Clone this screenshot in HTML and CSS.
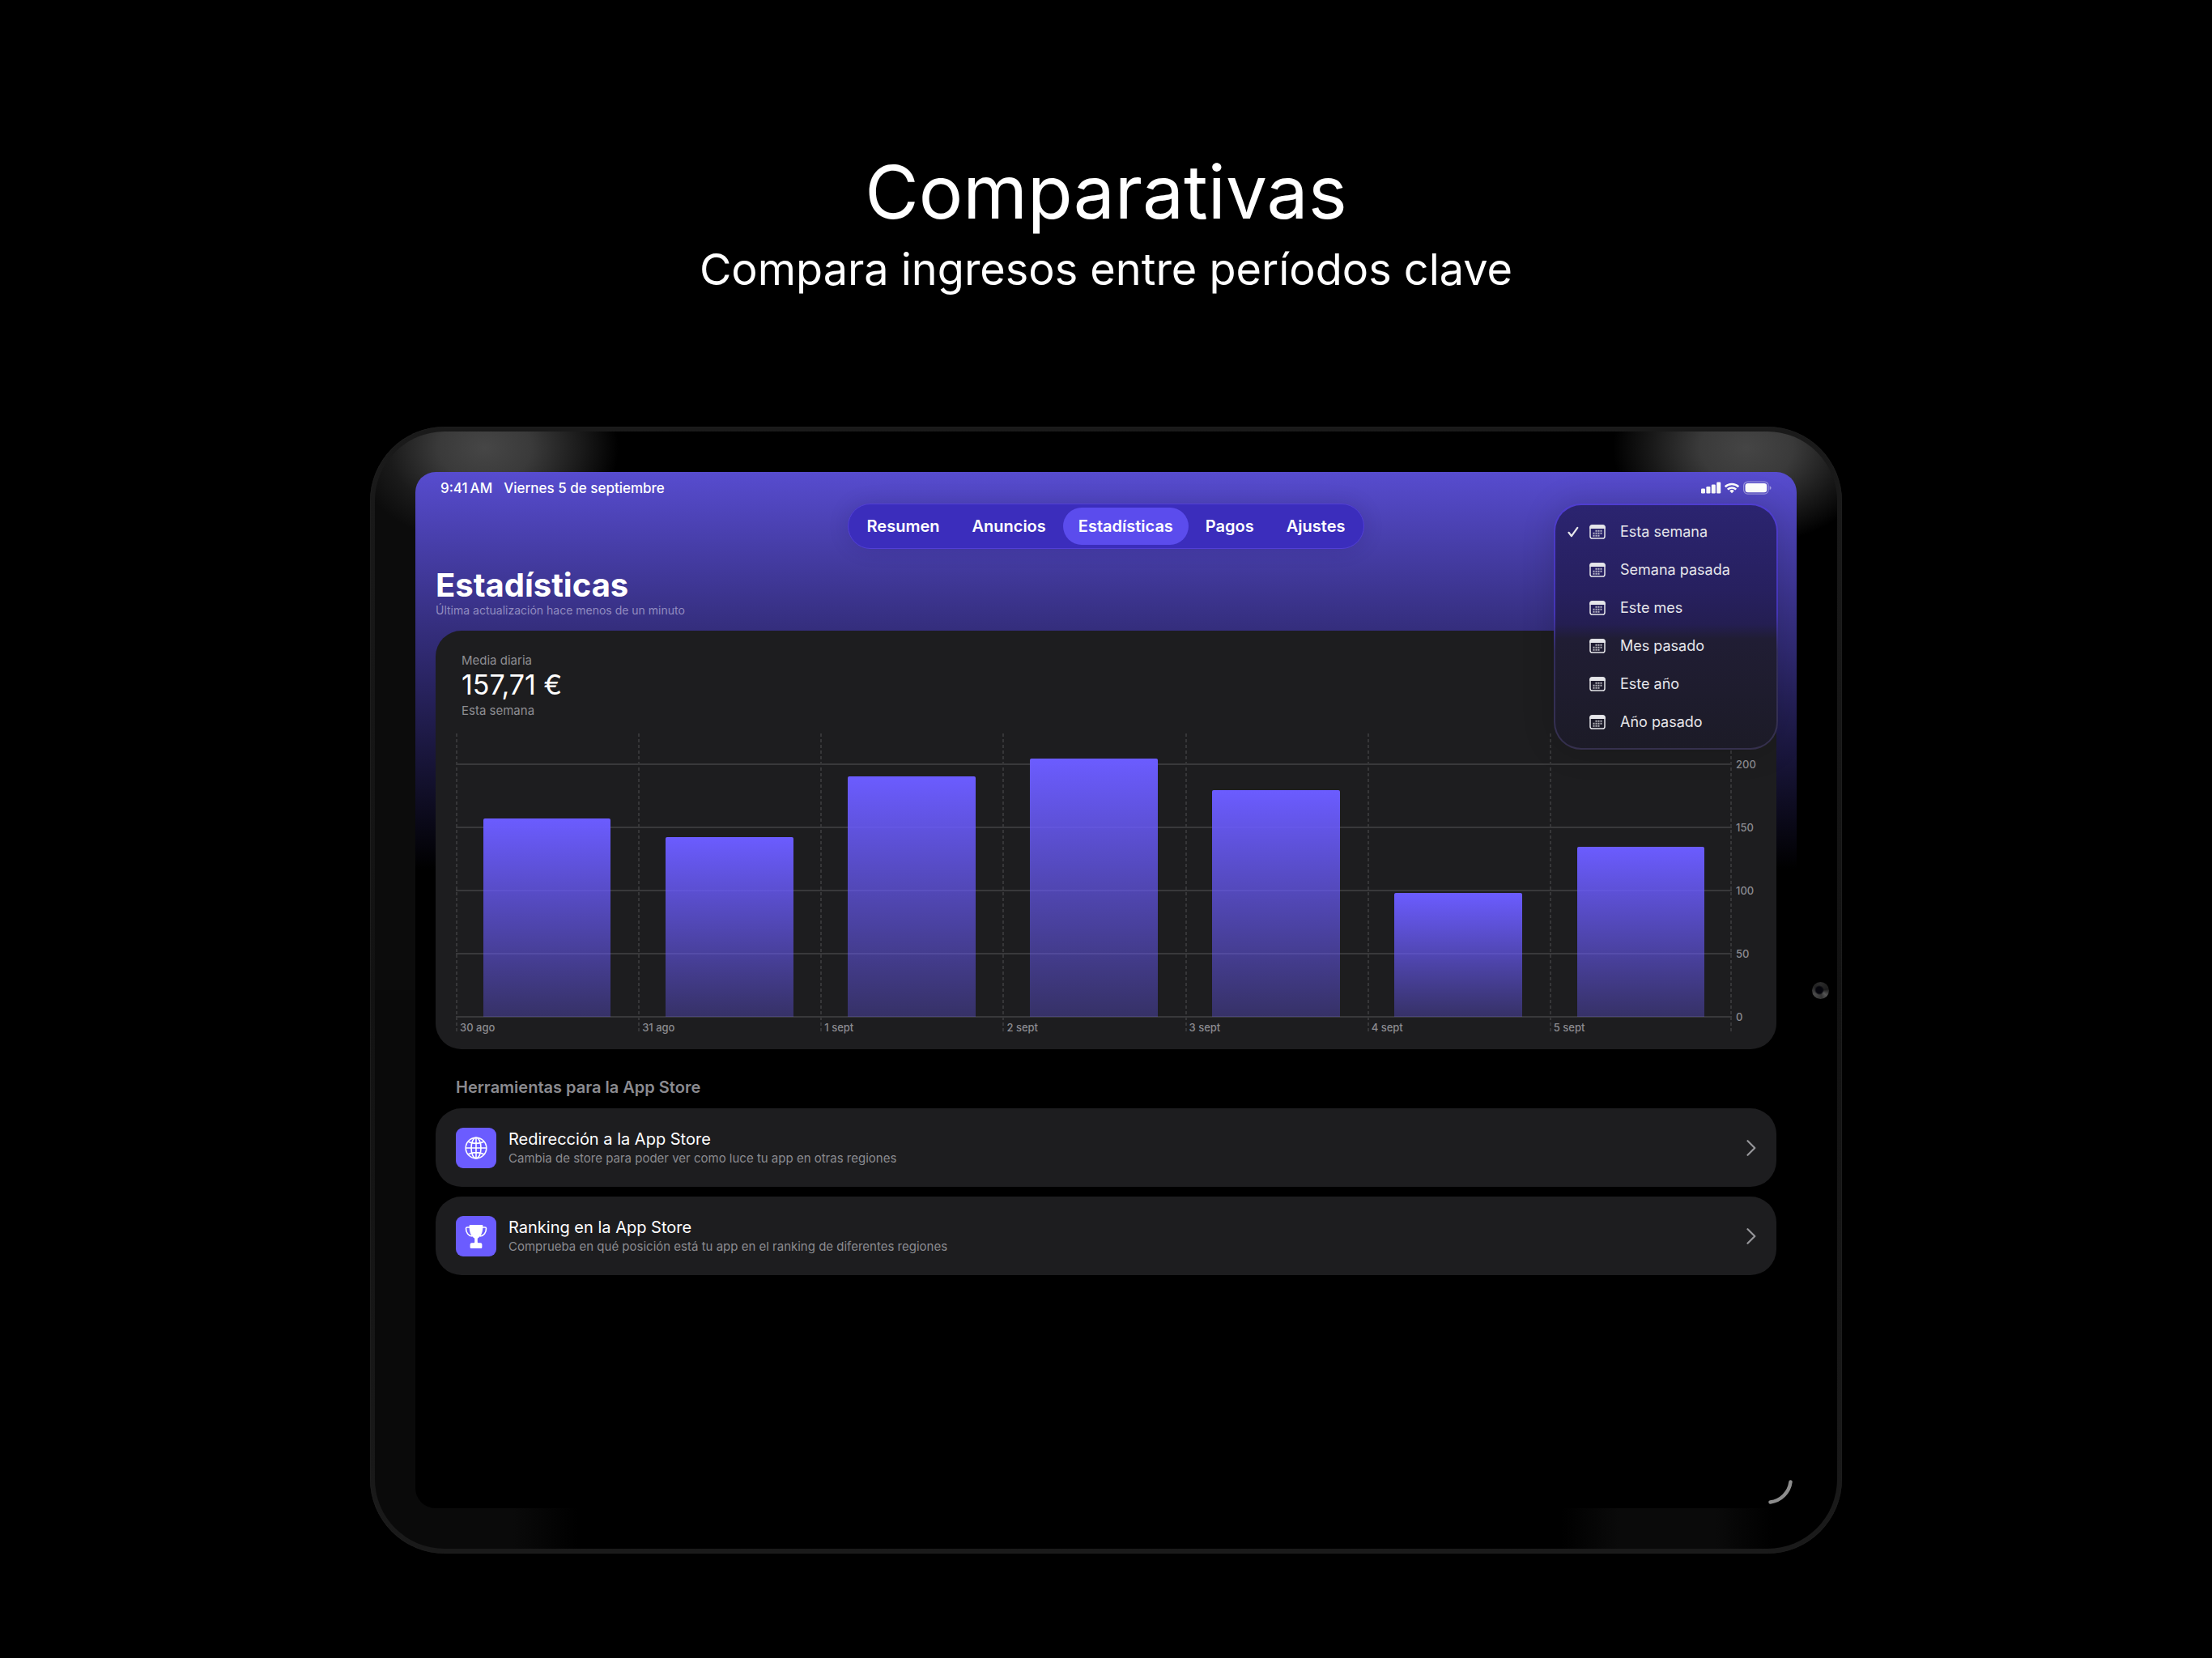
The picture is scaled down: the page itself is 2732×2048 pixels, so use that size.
FILE: index.html
```html
<!DOCTYPE html>
<html lang="es">
<head>
<meta charset="utf-8">
<meta name="viewport" content="width=device-width, initial-scale=1">
<title>Comparativas</title>
<link rel="stylesheet" href="styles.css">
</head>
<body>
<svg class="sprite" aria-hidden="true">
  <symbol id="calendar" viewBox="0 0 20 18">
    <rect x="1" y="1" width="18" height="16" rx="2.6" fill="none" stroke="currentColor" stroke-width="1.5"/>
    <path d="M.3 5V3.2Q.3.3 3.4.3h13.2q3.100 0 3.100 2.900V5z" fill="currentColor"/>
    <path d="M7.500 7.700h8.200M4.500 10.700h11.200M4.500 13.700h8.200" fill="none" stroke="currentColor" stroke-width="1.900" stroke-dasharray="2 1" opacity=".75"/>
  </symbol>
  <symbol id="chevron" viewBox="0 0 14 22">
    <path d="M2.5 2.2 11.3 11l-8.8 8.8" fill="none" stroke="currentColor" stroke-width="2.2" stroke-linecap="round" stroke-linejoin="round"/>
  </symbol>
</svg>

<header class="hero">
  <h1>Comparativas</h1>
  <p>Compara ingresos entre períodos clave</p>
</header>

<main class="device">
  <div class="bezel">
    <div class="screen">
      <div class="status">
        <span>9:41&#8201;AM</span><span>Viernes 5 de septiembre</span>
        <svg class="status-icons" viewBox="0 0 88 18" fill="#fff" aria-label="Señal, wifi y batería">
          <rect x="0" y="9.5" width="5" height="6" rx="1.2"/><rect x="6.4" y="7" width="5" height="8.500" rx="1.2"/><rect x="12.800" y="4.500" width="5" height="11" rx="1.2"/><rect x="19.200" y="1.500" width="5" height="14" rx="1.2"/>
          <g fill="none" stroke="#fff" stroke-width="2.600"><path d="M29.700 7.300a12 12 0 0 1 16.600 0"/><path d="M32.800 10.600a7.500 7.500 0 0 1 10.400 0"/></g><path d="M38 15.200l-2.800-2.900a4 4 0 0 1 5.600 0z"/>
          <rect x="52.600" y="1.100" width="30.500" height="15" rx="4.800" fill="none" stroke="#fff" stroke-opacity=".4" stroke-width="1.200"/><rect x="54.500" y="3" width="26.700" height="11.200" rx="3.200"/><path d="M84.600 6.300q2 .8 2 2.400t-2 2.400z" fill-opacity=".45"/>
        </svg>
      </div>

      <nav class="tabs" aria-label="Secciones">
        <a href="#resumen">Resumen</a>
        <a href="#anuncios">Anuncios</a>
        <a href="#estadisticas" class="active" aria-current="page">Estadísticas</a>
        <a href="#pagos">Pagos</a>
        <a href="#ajustes">Ajustes</a>
      </nav>

      <section class="content" id="estadisticas">
        <h2>Estadísticas</h2>
        <p class="updated">Última actualización hace menos de un minuto</p>

        <article class="card stats">
          <div class="summary">
            <p class="caption">Media diaria</p>
            <p class="amount">157,71 €</p>
            <p class="caption period">Esta semana</p>
          </div>
          <div class="chart">
            <div class="scale">
              <div><span>200</span></div>
              <div><span>150</span></div>
              <div><span>100</span></div>
              <div><span>50</span></div>
              <div><span>0</span></div>
            </div>
            <div class="days">
              <div class="day"><div class="track"><i style="height:70.1%"></i></div><span>30 ago</span></div>
              <div class="day"><div class="track"><i style="height:63.4%"></i></div><span>31 ago</span></div>
              <div class="day"><div class="track"><i style="height:84.8%"></i></div><span>1 sept</span></div>
              <div class="day"><div class="track"><i style="height:91.1%"></i></div><span>2 sept</span></div>
              <div class="day"><div class="track"><i style="height:79.9%"></i></div><span>3 sept</span></div>
              <div class="day"><div class="track"><i style="height:43.8%"></i></div><span>4 sept</span></div>
              <div class="day"><div class="track"><i style="height:60%"></i></div><span>5 sept</span></div>
            </div>
          </div>
        </article>

        <h3>Herramientas para la App Store</h3>
        <div class="tools">
          <a class="card tool" href="#redireccion">
            <span class="tile">
              <svg viewBox="0 0 30 30" width="30" height="30" fill="none" stroke="#fff" stroke-width="1.6"><circle cx="15" cy="15" r="12.800"/><ellipse cx="15" cy="15" rx="6" ry="12.800"/><path d="M15 2.200v25.600M2.200 15h25.600M5.200 7.200q9.800 4.400 19.600 0M5.200 22.800q9.800-4.400 19.600 0"/></svg>
            </span>
            <span class="words"><strong>Redirección a la App Store</strong><small>Cambia de store para poder ver como luce tu app en otras regiones</small></span>
            <svg class="chevron"><use href="#chevron"/></svg>
          </a>
          <a class="card tool" href="#ranking">
            <span class="tile">
              <svg viewBox="0 0 30 30" width="30" height="30"><path d="M7.600 1h14.800q1 0 1 1.200C23.400 9 22 14.600 17.400 17.200q-.6.400-.6 1v4q0 1 1 1h2.600q2 0 2 2v3.300q0 1.500-1.400 1.500H9q-1.400 0-1.400-1.500v-3.300q0-2 2-2h2.600q1 0 1-1v-4q0-.6-.6-1C8 14.600 6.600 9 6.600 2.200 6.600 1 7.600 1 7.600 1z" fill="#fff"/><path d="M7 4H4Q2.500 4 2.500 5.500C2.500 10.500 5.500 14.500 10 15M23 4h3q1.500 0 1.500 1.500C27.500 10.500 24.500 14.500 20 15" fill="none" stroke="#fff" stroke-width="1.600"/></svg>
            </span>
            <span class="words"><strong>Ranking en la App Store</strong><small>Comprueba en qué posición está tu app en el ranking de diferentes regiones</small></span>
            <svg class="chevron"><use href="#chevron"/></svg>
          </a>
        </div>
      </section>

      <div class="menu" role="menu" aria-label="Periodo">
        <button type="button" role="menuitemradio" aria-checked="true"><svg class="check" viewBox="0 0 14 14"><path d="M1.500 7.800 5 12.200 12.300 1.800" fill="none" stroke="currentColor" stroke-width="2.200" stroke-linecap="round" stroke-linejoin="round"/></svg><svg class="cal"><use href="#calendar"/></svg>Esta semana</button>
        <button type="button" role="menuitemradio" aria-checked="false"><svg class="cal"><use href="#calendar"/></svg>Semana pasada</button>
        <button type="button" role="menuitemradio" aria-checked="false"><svg class="cal"><use href="#calendar"/></svg>Este mes</button>
        <button type="button" role="menuitemradio" aria-checked="false"><svg class="cal"><use href="#calendar"/></svg>Mes pasado</button>
        <button type="button" role="menuitemradio" aria-checked="false"><svg class="cal"><use href="#calendar"/></svg>Este año</button>
        <button type="button" role="menuitemradio" aria-checked="false"><svg class="cal"><use href="#calendar"/></svg>Año pasado</button>
      </div>
      <svg class="corner" viewBox="0 0 32 32" aria-hidden="true"><path d="M28.500 3.500A29 29 0 0 1 3.500 28.500" fill="none" stroke="#8c8c8c" stroke-width="4.500" stroke-linecap="round"/></svg>
    </div>
    <div class="camera"></div>
  </div>
</main>
</body>
</html>
```

FILE: styles.css
```css
* { box-sizing: border-box; }

body {
  margin: 0;
  padding: 176px 24px 128px;
  background: #000;
  color: #fff;
  font-family: Inter, "Liberation Sans", sans-serif;
}

h1, h2, h3, p { margin: 0; }
a { color: inherit; text-decoration: none; }
.sprite { display: none; }

/* Headline */
.hero { text-align: center; margin-bottom: 159px; }
.hero h1 { font-size: 91px; line-height: 122px; font-weight: 400; }
.hero p { font-size: 54px; line-height: 70px; }

/* Tablet */
.device {
  max-width: 1818px;
  margin: 0 auto;
  padding: 6px;
  border-radius: 92px;
  background: linear-gradient(#1a1a1a, #121212 50%, #1a1a1a);
  box-shadow: inset 0 0 0 1px #1d1d1d;
}
.bezel {
  position: relative;
  padding: 50px;
  border-radius: 86px;
  background:
    radial-gradient(ellipse 165px 120px at 136px 20px, #464646 0, #3a3a3a 35%, #1a1a1a 72%, transparent 100%),
    radial-gradient(ellipse 165px 120px at calc(100% - 112px) 20px, #454545 0, #3a3a3a 35%, #181818 72%, transparent 100%),
    linear-gradient(90deg, #0a0a0a 0, #0a0a0a 170px, #000 250px, #000 calc(100% - 340px), #0a0a0a calc(100% - 270px), #0a0a0a calc(100% - 150px), #000 calc(100% - 80px)) bottom / 100% 50% no-repeat,
    linear-gradient(90deg, #0c0c0c 0, #0c0c0c 50px, #000 240px);
}
.camera {
  position: absolute;
  right: 10px;
  top: 50%;
  width: 21px;
  height: 21px;
  margin-top: -10px;
  border-radius: 50%;
  background:
    radial-gradient(circle at 9px 10px, #05050c 0, #05050c 4px, transparent 6px),
    conic-gradient(#2a2a2a, #1c1c1c 80deg, #555 130deg, #333 170deg, #4a4a4a 240deg, #222 300deg, #2a2a2a);
}
.screen {
  position: relative;
  aspect-ratio: 4 / 3;
  overflow: hidden;
  border-radius: 25px;
  background: #000 linear-gradient(#574ccf, #000 490px);
}

.status {
  display: flex;
  align-items: center;
  gap: 14px;
  height: 39px;
  padding: 0 30px 0 31px;
  font-size: 17px;
  font-weight: 500;
}
.status-icons { width: 88px; height: 18px; margin-left: auto; }

.tabs {
  display: flex;
  gap: 2px;
  width: fit-content;
  height: 56px;
  margin: 0 auto 22px;
  padding: 4px;
  border: 1px solid #5340d6;
  border-radius: 28px;
  background: #3b2dbc;
  box-shadow: 0 0 24px rgba(30, 20, 90, .2);
  font-size: 20px;
  font-weight: 600;
}
.tabs a {
  display: flex;
  align-items: center;
  padding: 0 19px;
  border-radius: 23px;
}
.tabs .active { background: #5b4ced; }

.content { padding: 0 25px; }
.content h2 { font-size: 40px; line-height: 46px; font-weight: 700; }
.updated { font-size: 14px; line-height: 16px; margin-bottom: 17px; color: #918cc0; }

.card { border-radius: 32px; background: #1d1d1f; }
.stats { padding: 27px 24px 21px 25px; }
.summary { padding-left: 7px; margin-bottom: 16px; }
.caption { font-size: 15px; line-height: 20px; color: #8e8e93; }
.period { line-height: 24px; }
.amount { font-size: 34px; line-height: 40px; }

/* Bar chart: the value scale and the days share one grid cell */
.chart { display: grid; grid-template-rows: 369px; font-size: 13px; font-weight: 500; color: #8b8b90; }
.scale, .days { grid-area: 1 / 1; }
.scale { align-self: end; margin-bottom: -20px; }
.scale div { display: flex; align-items: center; height: 78px; }
.scale div::before { content: ""; flex: 1; height: 2px; background: #39393b; }
.scale span { width: 31px; padding-left: 5px; }
.days {
  display: flex;
  margin-right: 31px;
  background: repeating-linear-gradient(#363638 0 4px, transparent 4px 7px) right / 2px 100% no-repeat;
}
.day {
  flex: 1;
  display: flex;
  flex-direction: column;
  background: repeating-linear-gradient(#363638 0 4px, transparent 4px 7px) left / 2px 100% no-repeat;
}
.track { flex: none; height: 350px; display: flex; align-items: flex-end; justify-content: center; }
.track i { width: 70%; border-radius: 2px 2px 0 0; background: linear-gradient(#6b5cff, rgba(107, 92, 255, .32)); }
.day span { padding-left: 5px; line-height: 27px; }

.content h3 { padding: 34px 25px 13px; font-size: 20px; line-height: 26px; font-weight: 600; color: #8b8b90; }
.tools { display: flex; flex-direction: column; gap: 12px; }
.tool { display: flex; align-items: center; gap: 15px; height: 97px; padding: 0 24px 0 25px; }
.tile { display: grid; place-items: center; width: 50px; height: 50px; border-radius: 9px; background: #6b5cff; }
.words { display: flex; flex-direction: column; }
.words strong { font-size: 20px; line-height: 26px; font-weight: 400; }
.words small { font-size: 15px; line-height: 22px; color: #8b8b90; }
.chevron { width: 14px; height: 22px; margin-left: auto; color: #96969a; }

/* Period menu, open over the page */
.menu {
  position: absolute;
  top: 39px;
  right: 23px;
  display: flex;
  flex-direction: column;
  width: 277px;
  padding: 9px 0;
  border: 2px solid transparent;
  border-radius: 34px;
  background:
    linear-gradient(#2b2470, #27205f 35%, #241e52 49%, #201d34 55%, #1c1b27) padding-box,
    linear-gradient(#4f3dd0, #4434b4 45%, #322d5c 60%, #35304d) border-box;
  box-shadow: 0 0 40px rgba(0, 0, 0, .16);
}
.menu button {
  display: flex;
  align-items: center;
  gap: 18px;
  height: 47px;
  padding: 0 0 0 42px;
  border: 0;
  background: none;
  color: #e6e6ea;
  font: 400 18px/24px Inter, "Liberation Sans", sans-serif;
}
.cal { width: 20px; height: 18px; }
.check { width: 14px; height: 14px; margin: 0 -5px 0 -27px; }

.corner { position: absolute; right: 4px; bottom: 4px; width: 32px; height: 32px; }
```
